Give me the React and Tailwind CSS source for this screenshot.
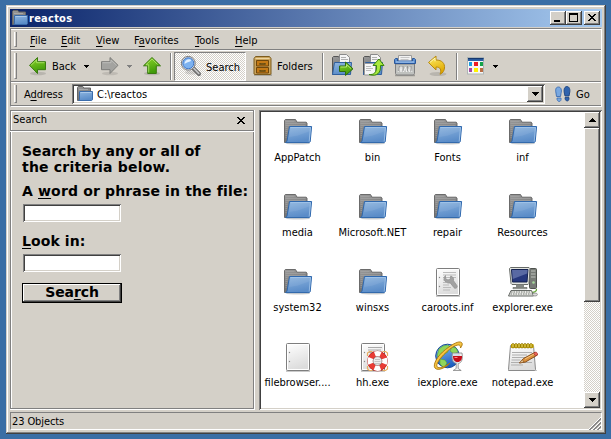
import React from "react";

/* ---------- text helpers ---------- */

function Hot({ children }) {
  return (
    <span className="underline decoration-1 underline-offset-[2px] [text-decoration-skip-ink:none]">{children}</span>
  );
}

/* ---------- 3D edges ---------- */

const raised =
  "bg-[#d4d0c8] shadow-[inset_-1px_-1px_#404040,inset_1px_1px_#fff,inset_-2px_-2px_#808080]";
const sunken =
  "bg-white shadow-[inset_1px_1px_#808080,inset_-1px_-1px_#fff,inset_2px_2px_#404040,inset_-2px_-2px_#d4d0c8]";
const dither =
  "bg-[repeating-conic-gradient(#ffffff_0_25%,#d4d0c8_0_50%)] bg-[length:2px_2px]";

function Grip() {
  return <div className="w-[3px] self-stretch shrink-0 border-l border-r border-l-white border-r-[#808080] border-b border-b-[#808080]" />;
}

function Separator() {
  return <div className="mr-px h-[27px] w-[2px] shrink-0 border-l border-r border-l-[#808080] border-r-white" />;
}

function Caret({ color = "#000" }) {
  return (
    <svg width="5" height="3" viewBox="0 0 5 3" className="shrink-0" shapeRendering="crispEdges">
      <path d="M0 0h5v1h-1v1h-1v1h-1v-1h-1v-1h-1z" fill={color} />
    </svg>
  );
}

/* ---------- gradients shared by the icons ---------- */

function Defs() {
  const grads = [
    ["gBlue", "#8fb6e0", "#5a8cc8"],
    ["gGray", "#9a9a9a", "#6e6e6e"],
    ["gGreen", "#8fd62c", "#3f9a08"],
    ["gPaper", "#ffffff", "#dcdcdc"],
    ["gYellow", "#fff06a", "#e0a800"],
    ["gGlobe", "#8fc4f8", "#1e5fc0"],
  ];
  return (
    <svg width="0" height="0" className="absolute">
      <defs>
        {grads.map(([id, a, b]) => (
          <linearGradient key={id} id={id} x1="0" y1="0" x2="0.3" y2="1">
            <stop offset="0" stopColor={a} />
            <stop offset="1" stopColor={b} />
          </linearGradient>
        ))}
      </defs>
    </svg>
  );
}

function Icon({ w = 32, h = 32, box = "0 0 32 32", children }) {
  return (
    <svg width={w} height={h} viewBox={box} fill="none" className="shrink-0">
      {children}
    </svg>
  );
}

function SmallFolder() {
  return (
    <Icon w={16} h={16} box="0 0 16 16">
      <path d="M.5 14.5V1.5l.7-1h4.600l1 1.500h6.700v12z" fill="url(#gGray)" stroke="#666" />
      <path d="M2 3.500h9M2 5.500h9M2 7.500h1" stroke="#b5b5b5" strokeWidth=".7" />
      <path d="M2.500 5.500h13v8.200l-.9.8H1.700l.8-1z" fill="url(#gBlue)" stroke="#3a6cab" />
      <path d="M3.500 6.500h11" stroke="#a9c8ea" />
    </Icon>
  );
}

function Folder() {
  return (
    <Icon>
      <ellipse cx="16" cy="28.500" rx="12" ry="1" fill="#000" opacity=".18" />
      <path d="M2.500 27.500v-22l.8-1h10.200l1.500 2.700h9.200l.8.800v19.500z" fill="url(#gGray)" stroke="#6b6b6b" />
      <path d="M3.500 6.500h9M3.500 8.500h20M3.500 10.500h20M3.500 12.500h2M3.500 14.500h2M3.500 16.500h2M3.500 18.500h1.500M3.500 20.500h1.500M3.500 22.500h1" stroke="#a8a8a8" strokeWidth=".6" />
      <path d="M7.500 11.500h22.100l-1.400 15.200-.9.900H3.600l1.400-1.500z" fill="url(#gBlue)" stroke="#2f68ae" />
      <path d="M8.500 12.500h20l-.3 3.600-13 4.600-8.200 1.200z" fill="#fff" opacity=".07" />
      <path d="M8.500 12.500h20l-1.300 14" stroke="#a5c6ea" strokeWidth=".8" />
    </Icon>
  );
}

function Sheet({ children }) {
  return (
    <Icon>
      <path d="M4 31.200h24" stroke="#000" opacity=".3" />
      <rect x="4.500" y="3.500" width="23" height="27" rx="1" fill="url(#gPaper)" stroke="#7e7e7e" />
      <path d="M5.500 29.500v-25h21v25z" stroke="#fff" />
      <circle cx="7.500" cy="12.500" r=".7" fill="#888" />
      <circle cx="7.500" cy="21.500" r=".7" fill="#888" />
      {children}
    </Icon>
  );
}

function InfIcon() {
  return (
    <Sheet>
      <path d="M11 7.500h13M11 10h13M11 12.500h13M11 15h4M11 17.500h3M11 20h6M11 22.500h8M11 25h7" stroke="#bbb" />
      <path d="M13.500 10.500v3l2.500 1.500 2.500-1.200.2-2.800c2 .4 3.300 2.200 2.800 4.700l3.500 5c1 1.800-1.700 3.600-3 2l-3.700-4.700c-2.800.5-5.300-.8-6-3.200-.5-1.700 0-3.200 1.200-4.300z" fill="#a2a2a2" stroke="#8d8d8d" strokeWidth=".7" />
    </Sheet>
  );
}

function HelpExeIcon() {
  return (
    <Sheet>
      <path d="M11 7.500h14M11 10h13M11 12.500h5" stroke="#aaa" />
      <path d="M10.500 16v-3l2-1.500h3M25.500 11.500h3l2 1.500v3M30.500 26v3l-2 1.500h-3M15.500 30.500h-3l-2-1.500v-3" stroke="#e9ae62" strokeWidth="1.200" />
      <circle cx="20.500" cy="21" r="7.300" stroke="#a61414" strokeWidth="6" />
      <circle cx="20.500" cy="21" r="7.300" stroke="#e83c35" strokeWidth="5" />
      <circle cx="20.500" cy="21" r="7.300" stroke="#fff" strokeWidth="5.200" strokeDasharray="5.730 5.730" strokeDashoffset="2.860" />
      <circle cx="20.500" cy="21" r="4.300" fill="#eee" stroke="#999" strokeWidth=".7" />
      <path d="M18 19.500h5M17.500 21.500h6M18 23.500h5" stroke="#bbb" strokeWidth=".8" />
    </Sheet>
  );
}

function ComputerIcon() {
  return (
    <Icon>
      <rect x="22.500" y="3.500" width="7" height="20" rx="1" fill="#777b76" stroke="#4e524d" />
      <path d="M24 6h4.500M24 9h4.500M24 12h4.500" stroke="#c0c4bd" />
      <circle cx="26.500" cy="17.500" r="1.300" fill="#a5d99b" />
      <path d="M2.500 3.500l1-1h18.500l1 1-1 15-1 1H5l-1-1z" fill="#e2e4df" stroke="#666a66" />
      <path d="M4.500 4.500h16.500l-1 12.500H5.500z" fill="#26377d" stroke="#15224f" />
      <path d="M5 5h15.500l-.3 3.500L5.800 14z" fill="#7484b9" opacity=".65" />
      <path d="M9 19.500h8v3H9z" fill="#858985" />
      <path d="M6 22.500h14v1.200H6z" fill="#c7cac5" stroke="#6d706c" strokeWidth=".8" />
      <path d="M23 27c4 1 7-.5 6.500-3" stroke="#62a533" strokeWidth="1.200" />
      <path d="M4 25.500h20.500l2 5.500H1.500z" fill="#e8e9e5" stroke="#646864" />
      <path d="M4 27h19M3.500 29h21" stroke="#777b76" strokeDasharray="1.500 1" />
      <ellipse cx="28" cy="29.500" rx="2.400" ry="1.500" fill="#ddd" stroke="#777" strokeWidth=".7" />
    </Icon>
  );
}

function BrowserIcon() {
  return (
    <Icon>
      <circle cx="15.500" cy="16" r="11.800" fill="url(#gGlobe)" stroke="#16479a" />
      <path d="M7 9l4-3 5-1 2 2-3 2 1 3-4 2-3 4-4-2zM8 19l5 1 2 3-3 5-4-4zM20 7l4 1 2 4-4 2-4-3z" fill="#8fd65b" stroke="#4b9a2d" strokeWidth=".5" />
      <path d="M3 28c-2.500-3 2-12 10.500-18.500C20.500 4 27 .500 29.500 2.500c1.500 1.200.500 3.500-1 5.500 0-2-.5-3-2-3-3 0-8 3-12.500 7.500C7 19 2.500 26 6 27.500c2.500 1 8-1.500 12-4.500-4 4.500-12 8.500-15 5z" fill="#f7c443" stroke="#a87408" strokeWidth=".9" />
      <path d="M20.500 13h9.500c1 5.500 0 10-3.800 10.500v5l3 2h-8l3-2v-5c-4-.8-4.700-5-3.700-10.500z" fill="#eee" fillOpacity=".85" stroke="#868686" strokeWidth=".8" />
      <path d="M21 16h9c.2 3.500-1.300 6-4.500 6S21 19.500 21 16z" fill="#c40d19" />
      <path d="M22.500 17.500h3" stroke="#ff8585" />
    </Icon>
  );
}

function NotepadIcon() {
  return (
    <Icon>
      <path d="M1 30.500h29" stroke="#000" opacity=".22" />
      <path d="M3.500 5.500h23l2 24-.7 1H1.700l-.2-1z" fill="url(#gPaper)" stroke="#8a8a8a" />
      <path d="M5 12.500h20M5 15h15M5 17.500h14M4.500 20h9M4 22.500h21M4 25h12" stroke="#aeaeae" />
      <path d="M4 4h22.500v4H4z" fill="#d9b500" />
      {[0, 1, 2, 3, 4, 5, 6].map((i) => (
        <rect key={i} x={5 + i * 3} y="3.500" width="2" height="4.500" rx="1" fill="#ffe95a" stroke="#7e6400" strokeWidth=".8" />
      ))}
      <path d="M12.500 23l4-4.500L28 12.300l2.500 2.700L18.500 22z" fill="#d9913f" stroke="#7c430f" strokeWidth=".9" />
      <path d="M26.500 13.200l1.700-1c1.300-.5 2.800 1.200 2.300 2.600l-1.800 1.200z" fill="#e6665c" stroke="#9c2922" strokeWidth=".6" />
      <path d="M12.500 23l2.800-3.300 1.500 2.200z" fill="#efd2a2" stroke="#7c430f" strokeWidth=".5" />
      <path d="M18 19l9-5" stroke="#f5c27d" />
    </Icon>
  );
}

/* ---------- toolbar icons ---------- */

function BackIcon() {
  return (
    <Icon w={20} h={20} box="0 0 20 20">
      <ellipse cx="10" cy="17.500" rx="8" ry="1.800" fill="#000" opacity=".13" />
      <path d="M1.500 9.300L9.500 1.500v4.200h8v8h-8v3.800z" fill="url(#gGreen)" stroke="#3a7a10" />
      <path d="M3 9.300L8.600 4v2.700h7.900" stroke="#b4e672" strokeWidth=".8" />
    </Icon>
  );
}

function ForwardIcon() {
  return (
    <Icon w={20} h={20} box="0 0 20 20">
      <ellipse cx="10" cy="17.500" rx="8" ry="1.800" fill="#000" opacity=".1" />
      <path d="M18 9.300L10 1.500v4.200H1.500v8H10v3.800z" fill="#a3a3a0" stroke="#7c7c79" />
      <path d="M2.500 6.700H11V4l5.600 5.300" stroke="#bdbdb9" />
    </Icon>
  );
}

function UpIcon() {
  return (
    <Icon w={20} h={20} box="0 0 20 20">
      <ellipse cx="10" cy="17.500" rx="8" ry="1.800" fill="#000" opacity=".13" />
      <path d="M10 1.500l8.500 8.300h-4.200v7.700H5.700V9.800H1.500z" fill="url(#gGreen)" stroke="#3a7a10" />
      <path d="M6.700 16.500V8.800H4L10 3l5.500 5.500" stroke="#b4e672" strokeWidth=".8" />
    </Icon>
  );
}

function MagnifierIcon() {
  return (
    <Icon w={22} h={22} box="0 0 22 22">
      <ellipse cx="12" cy="17.500" rx="7" ry="2" fill="#000" opacity=".12" />
      <path d="M13 13l6 6" stroke="#707070" strokeWidth="4" strokeLinecap="round" />
      <path d="M13.500 13l5.300 5.500" stroke="#c9c9c9" strokeWidth="1.600" strokeLinecap="round" />
      <circle cx="8.300" cy="8.300" r="6.900" fill="#eee" stroke="#777" />
      <circle cx="8.300" cy="8.300" r="5.500" fill="#7db2f0" stroke="#3a72c4" />
      <path d="M4.500 9c0-3 2-4.700 5-4.700 1.500 0 2 1 1 2-1.500 1-4 1-6 2.700z" fill="#e3f1ff" />
    </Icon>
  );
}

function CabinetIcon() {
  return (
    <Icon w={20} h={20} box="0 0 20 20">
      <path d="M1 19h18" stroke="#000" opacity=".25" strokeWidth="1.500" />
      <path d="M2.500 .5h14l1.500 2v15.500l-.8.500H1.800l-.8-.500V2.500z" fill="#c9a35c" stroke="#7c5c1f" />
      <path d="M2.500 2.500h14" stroke="#ecd49e" />
      <path d="M3.500 4.500h12v5.500h-12zM3.500 11.500h12V17h-12z" fill="#c57a16" stroke="#70470b" />
      <path d="M7 7v1h5V7M7 14v1h5v-1" stroke="#5f4a14" strokeWidth="1.300" />
    </Icon>
  );
}

function FolderPages({ children }) {
  return (
    <Icon w={24} h={24} box="0 0 24 24">
      <path d="M1.500 20.500V3.500l1-1h5l1 1.500h9v16z" fill="url(#gGray)" stroke="#555" />
      <path d="M8.500 7.500v-7h7l3 3v6h-10z" fill="#f5f5f5" stroke="#8a8a8a" />
      <path d="M10 3.500h5M10 5.500h7" stroke="#b0b0b0" />
      <path d="M3.500 8.500h17l-1 12h-18z" fill="url(#gBlue)" stroke="#2f5f9f" />
      {children}
    </Icon>
  );
}

function MoveIcon() {
  return (
    <FolderPages>
      <path d="M8.500 12h6V8l7.500 6.800-7.500 6.700v-4h-6z" fill="url(#gGreen)" stroke="#2f6e0b" />
      <path d="M9.500 13h6v-2.500l4.500 4" stroke="#c5f08a" strokeWidth=".8" />
    </FolderPages>
  );
}

function CopyIcon() {
  return (
    <FolderPages>
      <path d="M2.500 9.500h8l3 3v8.500h-11z" fill="#f7f7f7" stroke="#999" />
      <path d="M4 12.500h5M4 14.500h7M4 16.500h5" stroke="#bcbcbc" />
      <path d="M7 20.500c5 .5 8-2 7.500-9h-3.500l6-6.500 5 6.500h-3.500c.5 7-3 11.500-11.500 9z" fill="#a9e83e" stroke="#37850b" />
    </FolderPages>
  );
}

function ShredderIcon() {
  return (
    <Icon w={24} h={24} box="0 0 24 24">
      <path d="M2 21.500h20" stroke="#000" opacity=".25" strokeWidth="1.500" />
      <path d="M5.500 9V1.500h13V9z" fill="#f2f2f2" stroke="#9a9a9a" />
      <path d="M7.500 3.500h9M7.500 5.500h8" stroke="#c6c6c6" />
      <path d="M2.500 10h19v9.500l-1 1.500H3.500l-1-1.500z" fill="#bfc1be" stroke="#808080" />
      <path d="M1.500 5.500l1-1h2v2.500h15V4.500h2l1 1v4H1.500z" fill="#5b8fd0" stroke="#29579b" />
      <path d="M3 8h18" stroke="#b5d2f3" />
      <path d="M5 18l2-5 1 5 1-5 1.500 5 2-5 1 5 1-4 2 4 .5-5 2 5" stroke="#f2f2f2" strokeWidth=".9" />
      <path d="M5.500 17l1-5M10 17v-5M14.500 17v-5M18 17v-5" stroke="#8a8a8a" strokeWidth=".8" />
    </Icon>
  );
}

function UndoIcon() {
  return (
    <Icon w={20} h={22} box="0 0 20 22">
      <ellipse cx="11" cy="19" rx="8.500" ry="2" fill="#000" opacity=".13" />
      <path d="M1.500 7.500L9 1v4c6 0 9 3.500 8.500 8-.2 2.500-1.500 5-4.500 6.300 1.700-4.500.5-7.300-4-7.300v3z" fill="url(#gYellow)" stroke="#b88910" />
      <path d="M3 7.300l5-4.200V6.300" stroke="#fff8b8" />
    </Icon>
  );
}

function ViewsIcon() {
  return (
    <Icon w={18} h={18} box="0 0 18 18">
      <rect x=".5" y=".5" width="16" height="16.500" fill="#f6f6f6" stroke="#adb5b5" />
      <path d="M1 1h15.500v3H1z" fill="#2d62a8" />
      <path d="M1 1h15.500v1.200H1z" fill="#17386e" />
      <g shapeRendering="crispEdges">
        <path d="M2 5h3v4H2z" fill="#1a9fe0" />
        <path d="M7 5h4v4H7z" fill="#ed1c24" />
        <path d="M13 5h3v4h-3z" fill="#16a34a" />
        <path d="M2 11h3v4H2z" fill="#a349a4" />
        <path d="M7 11h4v4H7z" fill="#fff200" />
        <path d="M13 11h3v4h-3z" fill="#b96d44" />
      </g>
    </Icon>
  );
}

function FeetIcon() {
  return (
    <Icon w={16} h={16} box="0 0 16 16">
      <path d="M1 7C0 3 1.200 1 3.400 1 6 1 7 4 6 7.500L5.500 10.500h-4z" fill="#79a8e0" stroke="#3b6cb2" strokeWidth=".9" />
      <path d="M2 12h4c.5 2-.5 3.500-1.800 3.500S1.700 14 2 12z" fill="#79a8e0" stroke="#3b6cb2" strokeWidth=".8" />
      <path d="M9.300 7C8.500 3 9.700 .5 12 .5s3.500 3 2.600 6.500l-.6 3h-4z" fill="#2f63ae" stroke="#1c437f" strokeWidth=".9" />
      <path d="M10 11.500h4c.3 2-.5 3.500-1.800 3.500s-2.400-1.500-2.200-3.500z" fill="#2f63ae" stroke="#1c437f" strokeWidth=".8" />
    </Icon>
  );
}

/* ---------- content ---------- */

const menu = [
  ["", "F", "ile", "w-[31px]"],
  ["", "E", "dit", "w-[35px]"],
  ["", "V", "iew", "w-[38px]"],
  ["F", "a", "vorites", "w-[61px]"],
  ["", "T", "ools", "w-[40px]"],
  ["", "H", "elp", "w-[30px]"],
];

const files = [
  ["AppPatch", Folder],
  ["bin", Folder],
  ["Fonts", Folder],
  ["inf", Folder],
  ["media", Folder],
  ["Microsoft.NET", Folder],
  ["repair", Folder],
  ["Resources", Folder],
  ["system32", Folder],
  ["winsxs", Folder],
  ["caroots.inf", InfIcon],
  ["explorer.exe", ComputerIcon],
  ["filebrowser....", Sheet],
  ["hh.exe", HelpExeIcon],
  ["iexplore.exe", BrowserIcon],
  ["notepad.exe", NotepadIcon],
];

function TitleButton({ children }) {
  return (
    <div className={`h-[14px] w-4 ${raised}`}>
      <svg width="16" height="14" viewBox="0 0 16 14" shapeRendering="crispEdges">
        {children}
      </svg>
    </div>
  );
}

function ArrowButton({ up }) {
  return (
    <div className={`flex size-4 shrink-0 items-center justify-center ${raised}`}>
      <svg width="7" height="4" viewBox="0 0 7 4" shapeRendering="crispEdges">
        <path d={up ? "M3 0h1v1h1v1h1v1h1v1H0V3h1V2h1V1h1z" : "M0 0h7v1H6v1H5v1H4v1H3V3H2V2H1V1H0z"} fill="#000" />
      </svg>
    </div>
  );
}

const band = "flex border-t border-t-white shadow-[0_1px_#808080]";

export default function App() {
  return (
    <div className="h-[439px] w-[611px] overflow-hidden bg-[#3a6ea5] pl-[6px] pt-[5px] text-[11px] leading-[13px] text-black [font-family:'DejaVu_Sans_Condensed','DejaVu_Sans',sans-serif] [font-stretch:condensed]">
      <Defs />
      <div className="flex h-[429px] w-[600px] flex-col bg-[#d4d0c8] p-1 shadow-[inset_-1px_-1px_#404040,inset_1px_1px_#d4d0c8,inset_-2px_-2px_#808080,inset_2px_2px_#fff]">
        {/* title bar */}
        <div className="flex h-[18px] shrink-0 items-center bg-linear-to-r/srgb from-[#0a246a] to-[#a6caf0] pl-[2px] pr-[2px]">
          <SmallFolder />
          <span className="ml-[1px] flex-1 font-bold tracking-[0.25px] text-white">reactos</span>
          <TitleButton>
            <path d="M4 9h6v2H4z" fill="#000" />
          </TitleButton>
          <TitleButton>
            <path d="M3 2h9v9H3zM4 4v6h7V4z" fill="#000" fillRule="evenodd" />
          </TitleButton>
          <div className="w-[2px]" />
          <TitleButton>
            <path d="M4 3h2v1h1v1h2V4h1V3h2v1h-1v1h-1v1H9v1h1v1h1v1h1v1h-2V9H9V8H7v1H6v1H4V9h1V8h1V7h1V6H6V5H5V4H4z" fill="#000" />
          </TitleButton>
        </div>

        {/* bars */}
        <div className="mt-px flex h-[79px] shrink-0 flex-col border-b border-l border-r border-t border-b-white border-l-[#808080] border-r-white border-t-[#808080]">
          <div className={`${band} h-5 items-center pl-[3px]`}>
            <div className="flex h-[15px]">
              <Grip />
            </div>
            <div className="ml-[13px] flex pt-px">
              {menu.map(([a, k, b, w]) => (
                <span key={k + b} className={`${w}`}>
                  {a}
                  <Hot>{k}</Hot>
                  {b}
                </span>
              ))}
            </div>
          </div>

          <div className={`${band} mt-px h-[31px] items-center pl-[3px]`}>
            <div className="flex h-[26px]">
              <Grip />
            </div>
            <div className="w-[11px]" />
            <BackIcon />
            <span className="ml-[4px] w-[32px]">Back</span>
            <Caret />
            <div className="w-[11px]" />
            <ForwardIcon />
            <div className="w-[7px]" />
            <Caret color="#808080" />
            <div className="w-[10px]" />
            <UpIcon />
            <div className="w-[8px]" />
            <Separator />
            <div className={`ml-[1px] flex h-[29px] w-[72px] items-center border border-b-white border-l-[#808080] border-r-white border-t-[#808080] pl-[5px] ${dither}`}>
              <MagnifierIcon />
              <span className="ml-[4px] pt-[2px]">Search</span>
            </div>
            <div className="w-[7px]" />
            <CabinetIcon />
            <span className="ml-[4px] w-[45px]">Folders</span>
            <Separator />
            <div className="ml-[6px] flex gap-[7px]">
              <MoveIcon />
              <CopyIcon />
              <ShredderIcon />
            </div>
            <div className="w-[10px]" />
            <UndoIcon />
            <div className="w-[9px]" />
            <Separator />
            <div className="w-[8px]" />
            <ViewsIcon />
            <div className="w-[8px]" />
            <Caret />
          </div>

          <div className="mt-px flex h-[23px] items-center border-t border-t-white pl-[3px] shadow-[0_1px_#808080]">
            <div className="flex h-[18px]">
              <Grip />
            </div>
            <span className="ml-[7px] w-[48px] tracking-[-0.1px]">
              A<Hot>d</Hot>dress
            </span>
            <div className={`flex h-[20px] w-[473px] items-center p-[2px] pl-[5px] ${sunken}`}>
              <SmallFolder />
              <span className="ml-[4px] flex-1 pt-px">C:\reactos</span>
              <div className={`flex h-4 w-4 items-center justify-center ${raised}`}>
                <svg width="7" height="4" viewBox="0 0 7 4" shapeRendering="crispEdges">
                  <path d="M0 0h7v1H6v1H5v1H4v1H3V3H2V2H1V1H0z" fill="#000" />
                </svg>
              </div>
            </div>
            <div className="w-[10px]" />
            <FeetIcon />
            <span className="ml-[5px]">Go</span>
          </div>
        </div>

        {/* body */}
        <div className="mt-[3px] flex h-[300px] shrink-0">
          <div className="flex w-[245px] shrink-0 flex-col border-b border-r border-white shadow-[inset_1px_1px_#808080,inset_-1px_-1px_#808080,inset_2px_2px_#fff]">
            <div className="flex h-[22px] items-center border-b border-b-white pl-[3px] pr-[8px] shadow-[inset_0_-1px_#808080,inset_1px_1px_#808080]">
              <span className="flex-1 pb-[2px]">Search</span>
              <svg width="9" height="7" viewBox="0 0 9 7" shapeRendering="crispEdges">
                <path d="M0 0h2v1h1v1h2V1h1V0h2v1H7v1H6v1H5v1h1v1h1v1h1v1H6V6H5V5H3v1H2v1H0V6h1V5h1V4h1V3H2V2H1V1H0z" fill="#000" />
              </svg>
            </div>
            <div className="whitespace-nowrap pl-[12px] text-[14px] font-bold leading-[16px] [font-family:'DejaVu_Sans',Verdana,sans-serif] [font-stretch:normal]">
              <div className="mt-[11px] tracking-[0.04px]">Search by any or all of</div>
              <div className="tracking-[0.2px]">the criteria below.</div>
              <div className="mt-[8px] tracking-[0.15px]">
                A <Hot>w</Hot>ord or phrase in the file:
              </div>
              <div className={`ml-[1px] mt-[5px] h-[18px] w-[98px] ${sunken}`} />
              <div className="mt-[11px] tracking-[0.1px]">
                <Hot>L</Hot>ook in:
              </div>
              <div className={`ml-[1px] mt-[5px] h-[18px] w-[98px] ${sunken}`} />
              <div className="mt-[11px] h-5 w-[100px] border border-black">
                <div className={`flex h-full items-center justify-center pb-[2px] ${raised}`}>
                  <span className="tracking-[-0.1px]">
                    Sea<Hot>r</Hot>ch
                  </span>
                </div>
              </div>
            </div>
          </div>

          <div className={`ml-[4px] flex flex-1 p-[2px] ${sunken}`}>
            <div className="-ml-px grid flex-1 auto-rows-[75px] grid-cols-[repeat(4,75px)]">
              {files.map(([name, Glyph]) => (
                <div key={name} className="flex flex-col items-center pt-[3px]">
                  <Glyph />
                  <span className="mt-[4px] whitespace-nowrap">{name}</span>
                </div>
              ))}
            </div>
            <div className={`flex w-4 shrink-0 flex-col justify-between ${dither}`}>
              <div>
                <ArrowButton up />
                <div className={`h-[174px] w-4 ${raised}`} />
              </div>
              <ArrowButton />
            </div>
          </div>
        </div>

        {/* status bar */}
        <div className="mt-[2px] flex h-[18px] shrink-0 border border-b-white border-l-[#808080] border-r-white border-t-[#808080] pl-[1px]">
          <span className="flex-1 pt-[2px] tracking-[-0.1px]">23 Objects</span>
          <svg width="13" height="13" viewBox="0 0 13 13" className="mt-[4px] shrink-0">
            <path d="M0 13L13 0M4 13l9-9M8 13l5-5" stroke="#fff" />
            <path d="M1 13L13 1M2 13L13 2M5 13l8-8M6 13l7-7M9 13l4-4M10 13l3-3" stroke="#808080" strokeWidth=".9" />
          </svg>
        </div>
      </div>
    </div>
  );
}
